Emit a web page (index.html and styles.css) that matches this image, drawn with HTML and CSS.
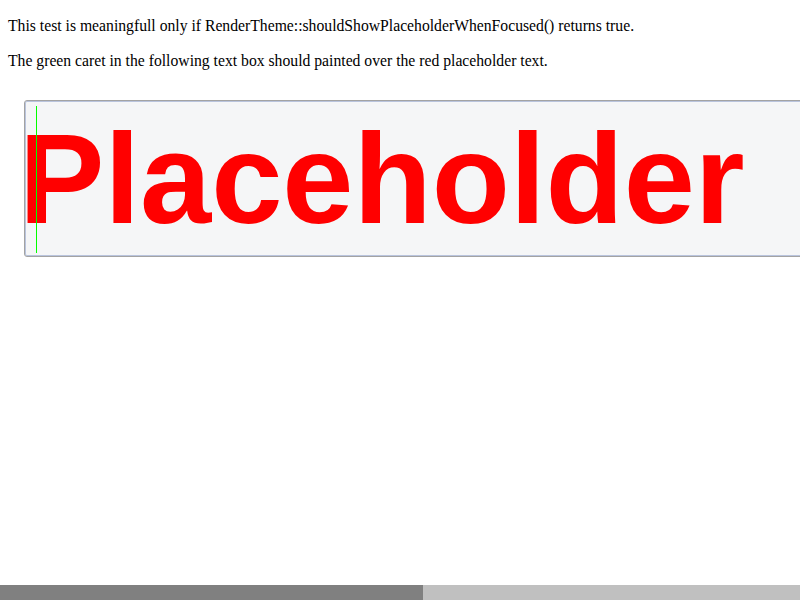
FILE: index.html
```html
<!DOCTYPE html>
<html>
<head>
<meta charset="utf-8">
<link rel="stylesheet" href="styles.css">
</head>
<body>
<div class="page">
  <div class="content">
    <p class="intro">This test is meaningfull only if RenderTheme::shouldShowPlaceholderWhenFocused() returns true.</p>
    <p class="note">The green caret in the following text box should painted over the red placeholder text.</p>
    <div class="field">
      <span class="placeholder">Placeholder</span>
      <span class="caret"></span>
    </div>
  </div>
  <div class="hscroll"><div class="thumb"></div></div>
</div>
</body>
</html>
```

FILE: styles.css
```css
html, body {
  margin: 0;
  padding: 0;
  background: #ffffff;
}
.page {
  width: 800px;
  height: 600px;
  display: flex;
  flex-direction: column;
  overflow: hidden;
}
.content {
  flex: 1;
  overflow: hidden;
  padding: 0 8px;
  font-family: "Liberation Serif", "Times New Roman", serif;
  font-size: 15.7px;
  color: #000;
}
.content p {
  line-height: 18px;
  white-space: nowrap;
}
.intro {
  margin: 17px 0 0;
}
.note {
  margin: 17px 0 0;
}
.field {
  position: relative;
  box-sizing: border-box;
  margin: 30px 0 0 16px;
  width: 1000px;
  height: 157px;
  border: 1px solid #a3a3a3;
  border-radius: 3px;
  box-shadow: inset 0 0 0 1px #b9c4dd;
  background: #f5f6f7;
  padding-top: 14px;
  overflow: hidden;
}
.placeholder {
  display: block;
  margin-left: -6px;
  font-family: "Liberation Sans", Arial, sans-serif;
  font-weight: bold;
  font-size: 128px;
  line-height: 128px;
  color: #ff0000;
  white-space: nowrap;
}
.caret {
  position: absolute;
  left: 11px;
  top: 5px;
  width: 1px;
  height: 147px;
  background: #00ff00;
}
.hscroll {
  height: 15px;
  background: #c0c0c0;
  display: flex;
}
.thumb {
  width: 423px;
  background: #808080;
}
```
